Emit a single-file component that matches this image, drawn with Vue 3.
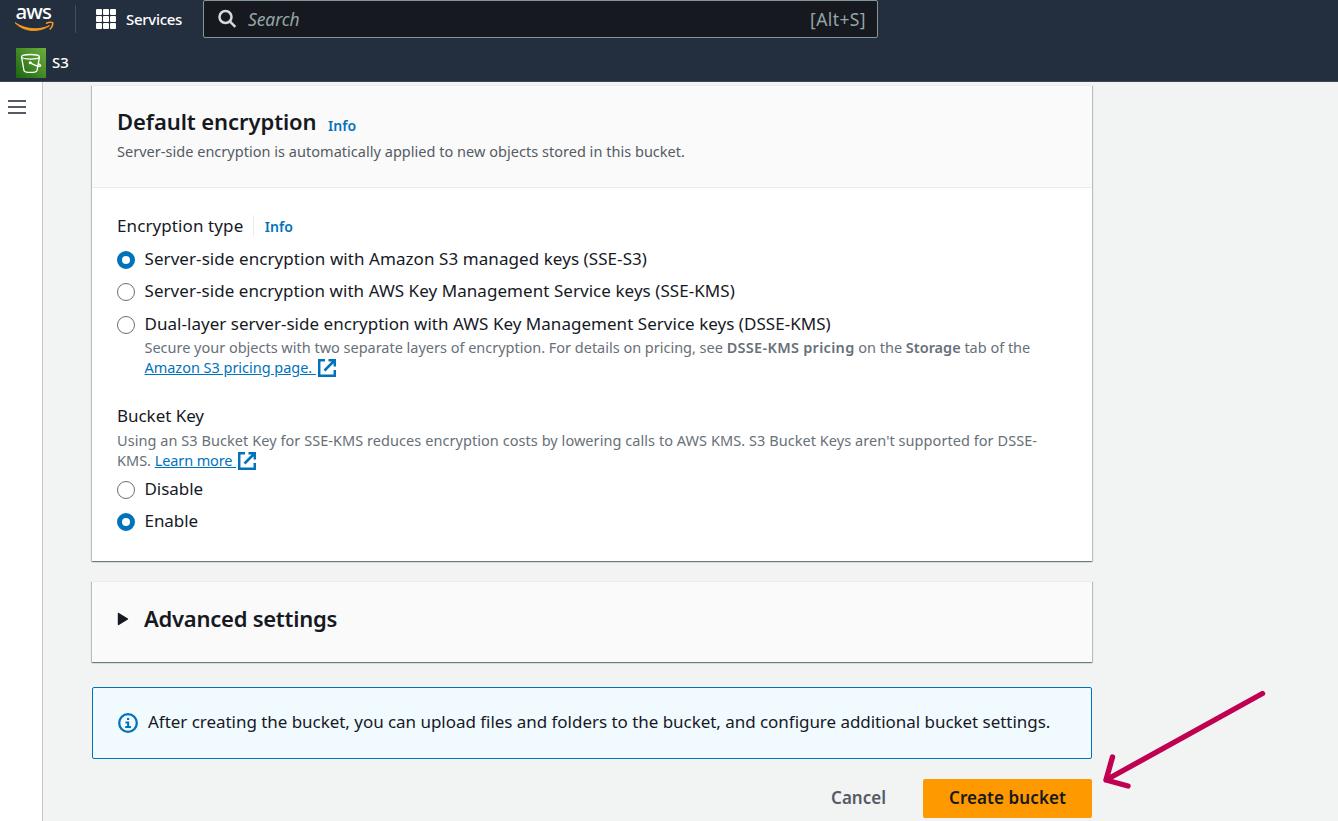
<script setup>
const encryptionOptions = [
  { label: 'Server-side encryption with Amazon S3 managed keys (SSE-S3)', checked: true, fit: 'fit-a' },
  { label: 'Server-side encryption with AWS Key Management Service keys (SSE-KMS)', checked: false, fit: 'fit-b' },
  { label: 'Dual-layer server-side encryption with AWS Key Management Service keys (DSSE-KMS)', checked: false, fit: 'fit-c' },
]
const bucketKeyOptions = [
  { label: 'Disable', checked: false },
  { label: 'Enable', checked: true },
]
</script>

<template>
  <div class="page">
    <header class="top">
      <div class="nav">
        <svg class="aws" width="42" height="32" viewBox="0 0 42 32">
          <text x="2.5" y="18.8" textLength="36.5">aws</text>
          <path d="M2 22.6C12 29.600 26 30.600 36.500 25.600C27 32.600 11 32.600 2 22.600Z" fill="#f8981d" stroke="#f8981d" stroke-width="0.900" stroke-linejoin="round" />
          <path d="M33.500 23.200C36 21.900 39 22 39.700 22.800C40.100 24.100 39 27.300 37.200 28.900" fill="none" stroke="#f8981d" stroke-width="1.600" stroke-linecap="round" />
        </svg>
        <span class="rule"></span>
        <span class="apps"><i v-for="n in 9" :key="n"></i></span>
        <span class="services">Services</span>
        <div class="search">
          <svg width="20" height="20" viewBox="0 0 20 20" fill="none" stroke="#d5dbdb" stroke-width="2.500">
            <circle cx="7.500" cy="8" r="6" />
            <path d="M11.800 12.300L17.300 17.800" />
          </svg>
          <span class="placeholder">Search</span>
          <span class="hotkey">[Alt+S]</span>
        </div>
      </div>
      <div class="favorites">
        <svg width="30" height="30" viewBox="0 0 30 30">
          <defs>
            <linearGradient id="s3g" x1="0" y1="1" x2="1" y2="0">
              <stop offset="0" stop-color="#1b660f" />
              <stop offset="1" stop-color="#6cae3e" />
            </linearGradient>
          </defs>
          <rect width="30" height="30" fill="url(#s3g)" />
          <g fill="none" stroke="#fff" stroke-width="1.300" stroke-linejoin="round">
            <ellipse cx="14.500" cy="8.800" rx="9" ry="2.300" />
            <path d="M5.500 8.800L8 22.600C8.500 25 20.500 25 21 22.600L23.500 8.800" />
            <path d="M14.500 14.900C18 17 22 18.600 24.200 18.200C25.300 17.700 24 16.500 22.200 15.600" />
            <circle cx="14.200" cy="14.700" r="0.900" fill="#fff" />
          </g>
        </svg>
        <span>S3</span>
      </div>
    </header>

    <div class="main">
      <aside class="side"><span class="burger"><i></i><i></i><i></i></span></aside>

      <main class="content">
        <section class="card encryption">
          <div class="card-head">
            <div class="title-row">
              <h2>Default encryption</h2>
              <a class="info">Info</a>
            </div>
            <p class="small sub">Server-side encryption is automatically applied to new objects stored in this bucket.</p>
          </div>
          <div class="card-body">
            <div class="label-row">
              <span class="label">Encryption type</span>
              <a class="info divided"><span>Info</span></a>
            </div>
            <div v-for="o in encryptionOptions" :key="o.label" class="option">
              <span class="radio" :class="{ on: o.checked }"></span>
              <span class="text" :class="o.fit">{{ o.label }}</span>
            </div>
            <div class="small note">
              <div class="pricing">Secure your objects with two separate layers of encryption. For details on pricing, see <b class="wide">DSSE-KMS pricing</b> on the <b>Storage</b> tab of the</div>
              <div class="line"><a class="link pricing-link">Amazon S3 pricing page.&nbsp;</a><svg class="ext" width="18" height="18" viewBox="0 0 18 18"><path d="M7 1.200H1.200V16.800H16.800V11M10.500 1.200H16.800V7.500M16.500 1.500L6.500 11.500" /></svg></div>
            </div>
            <div class="label key-label">Bucket Key</div>
            <div class="small key-note">
              <div class="using">Using an S3 Bucket Key for SSE-KMS reduces encryption costs by lowering calls to AWS KMS. S3 Bucket Keys aren't supported for DSSE-</div>
              <div class="line">KMS.&nbsp;<a class="link learn">Learn more&nbsp;</a><svg class="ext" width="18" height="18" viewBox="0 0 18 18"><path d="M7 1.200H1.200V16.800H16.800V11M10.500 1.200H16.800V7.500M16.500 1.500L6.500 11.500" /></svg></div>
            </div>
            <div v-for="o in bucketKeyOptions" :key="o.label" class="option key-option">
              <span class="radio" :class="{ on: o.checked }"></span>
              <span class="text">{{ o.label }}</span>
            </div>
          </div>
        </section>

        <section class="card advanced">
          <svg width="12" height="14" viewBox="0 0 12 14"><path d="M1.500 1.500L10.500 7L1.500 12.500Z" fill="#16191f" stroke="#16191f" stroke-width="1.400" stroke-linejoin="round" /></svg>
          <h2>Advanced settings</h2>
        </section>

        <section class="alert">
          <svg width="20" height="20" viewBox="0 0 20 20">
            <circle cx="10" cy="10" r="8.800" fill="none" stroke="#0073bb" stroke-width="2.300" />
            <path d="M9 5H11.200V7H9ZM7.500 8.600H11.200V13H12.900V14.900H7.200V13H9.100V10.400H7.500Z" fill="#0073bb" />
          </svg>
          <span>After creating the bucket, you can upload files and folders to the bucket, and configure additional bucket settings.</span>
        </section>

        <div class="actions">
          <button class="cancel">Cancel</button>
          <button class="create">Create bucket</button>
        </div>
      </main>
    </div>

    <svg class="arrow" width="170" height="106" viewBox="0 0 170 106" fill="none" stroke="#c00050" stroke-width="5.400" stroke-linecap="round" stroke-linejoin="round">
      <path d="M162.500 8.500L6 95M12.500 72L6 95L28 101" />
    </svg>
  </div>
</template>

<style>
body { overflow: hidden; }
</style>

<style scoped>
.page {
  position: relative;
  width: 1338px;
  height: 821px;
  overflow: hidden;
  background: #f2f3f3;
  color: #16191f;
  font-family: "Noto Sans", "Open Sans", sans-serif;
  font-size: 17px;
  line-height: 22px;
  white-space: nowrap;
  display: flex;
  flex-direction: column;
}
h2, p { margin: 0; }
.top {
  box-sizing: border-box;
  height: 82px;
  flex: none;
  background: #232f3e;
  border-bottom: 1px solid #414750;
}
.nav { display: flex; height: 38px; align-items: center; }
.aws { margin-left: 13px; align-self: flex-start; overflow: visible; }
.aws text { font-size: 20.5px; font-weight: 500; fill: #fff; }
.rule { width: 1px; height: 28px; margin-left: 20px; background: #414d5c; }
.apps {
  display: grid;
  grid-template-columns: repeat(3, 6px);
  gap: 1px;
  margin-left: 20px;
}
.apps i { width: 6px; height: 6px; border-radius: 1px; background: #fff; }
.services { margin-left: 10px; width: 77px; color: #fff; font-size: 15px; font-weight: 500; letter-spacing: -0.3px; }
.search {
  box-sizing: border-box;
  width: 675px;
  height: 38px;
  padding: 0 11px 0 14px;
  display: flex;
  align-items: center;
  background: #16191f;
  border: 1px solid #879596;
  border-radius: 2px;
  color: #95a5a6;
}
.placeholder { margin-left: 10px; font-size: 17.5px; font-style: italic; letter-spacing: -0.1px; }
.hotkey { margin-left: auto; font-size: 17.5px; letter-spacing: 0.4px; }
.favorites { display: flex; align-items: center; margin: 10px 0 0 16px; height: 30px; }
.favorites span { margin: -2px 0 0 6px; color: #fff; font-size: 15px; font-weight: 500; }

.main { display: flex; flex: 1; min-height: 0; }
.side { box-sizing: border-box; width: 43px; background: #fff; border-right: 1px solid #c3c8c8; }
.burger { display: flex; flex-direction: column; gap: 4px; margin: 17.500px 0 0 8px; width: 18px; }
.burger i { height: 2.300px; background: #545b64; }
.content { width: 1000px; margin-left: 49px; padding-top: 3px; }

.card {
  box-sizing: border-box;
  background: #fff;
  border-top: 1px solid #eaeded;
  box-shadow: 0 1px 1px 0 rgba(0, 28, 36, .3), 1px 1px 1px 0 rgba(0, 28, 36, .2), -1px 1px 1px 0 rgba(0, 28, 36, .2);
}
.encryption { height: 476px; }
.card-head {
  box-sizing: border-box;
  height: 102px;
  padding: 21px 25px 0;
  background: #fafafa;
  border-bottom: 1px solid #eaeded;
}
h2 { font-size: 22px; line-height: 28px; font-weight: 600; letter-spacing: -0.08px; }
.title-row { display: flex; align-items: baseline; gap: 11.500px; }
.title-row .info { position: relative; top: 1px; }
.info { color: #0073bb; font-size: 14px; font-weight: 600; }
.small { font-size: 14.5px; line-height: 20px; color: #687078; }
.sub { margin-top: 5px; color: #545b64; letter-spacing: 0.025px; }
.card-body { padding: 27px 25px 0; }
.label-row { display: flex; align-items: center; height: 22px; margin-bottom: 11px; }
.label { letter-spacing: 0.1px; }
.divided { margin-left: 10px; padding-left: 10.500px; border-left: 1px solid #eaeded; }
.divided span { position: relative; top: 1px; }
.option { display: flex; align-items: center; height: 22px; margin-bottom: 10.5px; }
.option:nth-child(2) { margin-bottom: 10px; }
.option:nth-child(3) { margin-bottom: 11px; }
.option:nth-child(4) { margin-bottom: 2px; }
.radio {
  box-sizing: border-box;
  width: 18px;
  height: 18px;
  margin: 1.500px 9.500px 0 0;
  border: 1px solid #687078;
  border-radius: 50%;
  background: #fff;
}
.radio.on { border: 5.500px solid #0073bb; }
.fit-a { letter-spacing: 0.07px; }
.fit-b { letter-spacing: 0.055px; }
.fit-c { letter-spacing: 0.03px; }
.note { margin-left: 27.500px; height: 40px; letter-spacing: -0.012px; }
.pricing b { font-weight: 600; }
.pricing .wide { letter-spacing: 0.3px; }
.line { display: flex; align-items: center; }
.link { color: #0073bb; text-decoration: underline; }
.pricing-link { letter-spacing: -0.03px; }
.learn { letter-spacing: -0.12px; }
.ext { fill: none; stroke: #0073bb; stroke-width: 2.500; margin: 1px 0 0 2px; }
.key-label { margin-top: 28px; letter-spacing: -0.04px; }
.key-note { margin: 3px 0 8px; }
.using { letter-spacing: 0.056px; }
.key-option { margin-bottom: 10px; letter-spacing: -0.05px; }

.advanced {
  height: 81px;
  margin-top: 20px;
  padding: 0 25px 3px;
  display: flex;
  align-items: center;
  gap: 15px;
  background: #fafafa;
}
.advanced svg { margin-top: -3px; }
.advanced h2 { letter-spacing: -0.25px; margin-top: -6px; }
.alert {
  box-sizing: border-box;
  height: 72px;
  margin-top: 25px;
  padding: 0 25px 2px;
  display: flex;
  align-items: center;
  gap: 10px;
  background: #f1faff;
  border: 1px solid #0073bb;
  border-radius: 2px;
  letter-spacing: -0.038px;
}
.alert svg { margin-top: 2px; }
.actions { display: flex; justify-content: flex-end; margin-top: 20px; }
button {
  height: 39px;
  border: 0;
  padding: 0 0 2px;
  border-radius: 2px;
  font: 600 17px/22px "Noto Sans", sans-serif;
}
.cancel { width: 129px; background: none; color: #545b64; }
.create { width: 169px; background: #ff9900; color: #16191f; letter-spacing: 0.08px; }
.arrow { position: absolute; left: 1100px; top: 685px; }
</style>
